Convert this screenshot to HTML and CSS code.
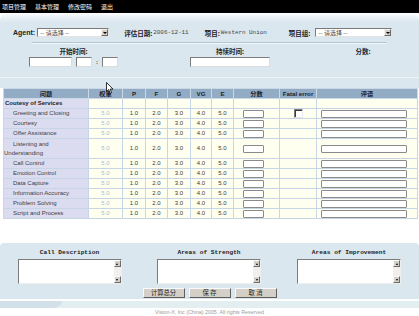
FILE: index.html
```html
<!DOCTYPE html>
<html>
<head>
<meta charset="utf-8">
<title>评估</title>
<link rel="stylesheet" href="styles.css">
</head>
<body>
<div class="nav"><span>项目管理</span><span>基本管理</span><span>修改密码</span><span>退出</span></div>

<div class="top">
  <div class="row1">
    <b class="agent">Agent:</b>
    <div class="sel s1"><span>-- 请选择 --</span><i></i></div>
    <b class="lbl date">评估日期:</b><span class="mono">2006-12-11</span>
    <b class="lbl proj">项目:</b><span class="mono">Western Union</span>
    <b class="lbl grp">项目组:</b>
    <div class="sel s2"><span>-- 请选择 --</span><i></i></div>
  </div>
  <div class="sep"></div>
  <div class="row2">
    <div class="g">
      <b class="lbl">开始时间:</b>
      <div class="inrow"><span class="in w43"></span><span class="in w16"></span><b class="colon">:</b><span class="in w16"></span></div>
    </div>
    <div class="g">
      <b class="lbl">持续时间:</b>
      <div class="inrow"><span class="in w80"></span></div>
    </div>
    <div class="g"><b class="lbl">分数:</b></div>
  </div>
  <div class="sep2"></div>
</div>

<table class="grid">
  <colgroup>
    <col style="width:85px"><col style="width:34px"><col style="width:23px"><col style="width:22px"><col style="width:23px"><col style="width:21px"><col style="width:22px"><col style="width:46px"><col style="width:37px"><col style="width:101px">
  </colgroup>
  <tr><th>问题</th><th>权重</th><th>P</th><th>F</th><th>G</th><th>VG</th><th>E</th><th>分数</th><th>Fatal error</th><th>评语</th></tr>
  <tr><td class="q sec">Coutesy of Services</td><td></td><td></td><td></td><td></td><td></td><td></td><td></td><td></td><td></td></tr>
  <tr><td class="q">Greeting and Closing</td><td class="w">5.0</td><td>1.0</td><td>2.0</td><td>3.0</td><td>4.0</td><td>5.0</td><td class="sc"><span class="ti"></span></td><td><span class="cb"></span></td><td class="cm"><span class="ti wide"></span></td></tr>
  <tr><td class="q">Courtesy</td><td class="w">5.0</td><td>1.0</td><td>2.0</td><td>3.0</td><td>4.0</td><td>5.0</td><td class="sc"><span class="ti"></span></td><td></td><td class="cm"><span class="ti wide"></span></td></tr>
  <tr><td class="q">Offer Assistance</td><td class="w">5.0</td><td>1.0</td><td>2.0</td><td>3.0</td><td>4.0</td><td>5.0</td><td class="sc"><span class="ti"></span></td><td></td><td class="cm"><span class="ti wide"></span></td></tr>
  <tr class="dbl"><td class="q">Listening and<br>Understanding</td><td class="w">5.0</td><td>1.0</td><td>2.0</td><td>3.0</td><td>4.0</td><td>5.0</td><td class="sc"><span class="ti"></span></td><td></td><td class="cm"><span class="ti wide"></span></td></tr>
  <tr><td class="q">Call Control</td><td class="w">5.0</td><td>1.0</td><td>2.0</td><td>3.0</td><td>4.0</td><td>5.0</td><td class="sc"><span class="ti"></span></td><td></td><td class="cm"><span class="ti wide"></span></td></tr>
  <tr><td class="q">Emotion Control</td><td class="w">5.0</td><td>1.0</td><td>2.0</td><td>3.0</td><td>4.0</td><td>5.0</td><td class="sc"><span class="ti"></span></td><td></td><td class="cm"><span class="ti wide"></span></td></tr>
  <tr><td class="q">Data Capture</td><td class="w">5.0</td><td>1.0</td><td>2.0</td><td>3.0</td><td>4.0</td><td>5.0</td><td class="sc"><span class="ti"></span></td><td></td><td class="cm"><span class="ti wide"></span></td></tr>
  <tr><td class="q">Information Accuracy</td><td class="w">5.0</td><td>1.0</td><td>2.0</td><td>3.0</td><td>4.0</td><td>5.0</td><td class="sc"><span class="ti"></span></td><td></td><td class="cm"><span class="ti wide"></span></td></tr>
  <tr><td class="q">Problem Solving</td><td class="w">5.0</td><td>1.0</td><td>2.0</td><td>3.0</td><td>4.0</td><td>5.0</td><td class="sc"><span class="ti"></span></td><td></td><td class="cm"><span class="ti wide"></span></td></tr>
  <tr><td class="q">Script and Process</td><td class="w">5.0</td><td>1.0</td><td>2.0</td><td>3.0</td><td>4.0</td><td>5.0</td><td class="sc"><span class="ti"></span></td><td></td><td class="cm"><span class="ti wide"></span></td></tr>
</table>

<div class="bottom">
  <div class="cols">
    <div class="col"><b>Call Description</b><div class="ta"><div class="sb"><i class="up"></i><i class="dn"></i></div></div></div>
    <div class="col"><b>Areas of Strength</b><div class="ta"><div class="sb"><i class="up"></i><i class="dn"></i></div></div></div>
    <div class="col"><b>Areas of Improvement</b><div class="ta"><div class="sb"><i class="up"></i><i class="dn"></i></div></div></div>
  </div>
  <div class="btns"><span class="btn">计算总分</span><span class="btn">保 存</span><span class="btn">取 消</span></div>
</div>

<div class="band"><span class="tab"></span></div>
<div class="copy">Vision-X, Inc (China) 2005. All rights Reserved</div>

<svg class="cursor" width="8" height="12" viewBox="0 0 8 12"><path d="M0.5 0.5 L0.5 9.5 L2.6 7.6 L4.2 11.2 L5.6 10.6 L4.1 7.1 L7 7.1 Z" fill="#fff" stroke="#000" stroke-width="0.8" stroke-linejoin="round"/></svg>
</body>
</html>
```
FILE: styles.css
```css
* { box-sizing: border-box; }
html, body { margin: 0; padding: 0; background: #fff; }
body {
  width: 419px;
  height: 316px;
  overflow: hidden;
  position: relative;
  font-family: "Liberation Sans", "Noto Sans CJK SC", sans-serif;
  color: #333;
}

.nav {
  height: 13px;
  background: #000;
  color: #fff;
  font: 6px/13px "Noto Sans CJK SC", sans-serif;
  padding-left: 2px;
  display: flex;
  gap: 9px;
}

.top {
  margin-top: 1px;
  height: 74px;
  border-radius: 6px 6px 0 0;
  background: linear-gradient(#f8fbfc 0, #e9f1f6 4px, #dbe7ef 8px, #dbe7ef 100%);
  padding-top: 14px;
}

.row1 {
  display: flex;
  align-items: center;
  height: 9px;
  white-space: nowrap;
}
.agent { margin-left: 13px; font: bold 7px/9px "Liberation Sans", sans-serif; color: #222; }
.lbl { font: bold 6.5px/8px "Noto Sans CJK SC", sans-serif; color: #222; }
.mono { font: 5.9px/9px "Liberation Mono", monospace; color: #444; margin-left: 1px; }
.date { margin-left: 15px; }
.proj { margin-left: 16px; }
.grp { margin-left: 22px; }

.sel {
  height: 9px;
  display: flex;
  align-items: center;
  background: #fff;
  border: 1px solid;
  border-color: #7a7a7a #e4e4e4 #e4e4e4 #7a7a7a;
  padding-left: 2px;
  font: 6px/7px "Noto Sans CJK SC", sans-serif;
  color: #444;
}
.sel span { flex: 1; }
.sel i {
  width: 7px;
  height: 7px;
  background: #d4d0c8;
  border: 1px solid;
  border-color: #f4f4f4 #6a6a6a #6a6a6a #f4f4f4;
  display: flex;
  align-items: center;
  justify-content: center;
}
.sel i::after {
  content: "";
  border-left: 2px solid transparent;
  border-right: 2px solid transparent;
  border-top: 2px solid #000;
}
.s1 { margin-left: 2px; width: 72px; }
.s2 { margin-left: 5px; width: 77px; }

.sep {
  margin: 5px 32px 0 32px;
  height: 2px;
  border-top: 1px solid #b5c5d2;
  border-bottom: 1px solid #f2f7fa;
}

.row2 {
  margin-top: 3px;
  display: grid;
  grid-template-columns: 147px 166px 100px;
}
.g { display: flex; flex-direction: column; align-items: center; }
.inrow { margin-top: 2px; display: flex; align-items: center; gap: 4px; }
.in {
  display: block;
  height: 10px;
  background: #fff;
  border: 1px solid;
  border-color: #7c7c7c #dcdcdc #dcdcdc #7c7c7c;
}
.w43 { width: 43px; }
.w16 { width: 16px; }
.w80 { width: 80px; }
.colon { font: bold 6px/8px "Liberation Sans", sans-serif; color: #333; }

.sep2 {
  margin-top: 10px;
  height: 1px;
  background: #eef4f8;
}

table.grid {
  margin: 0 2px 0 3px;
  width: 414px;
  border-collapse: collapse;
  table-layout: fixed;
  font-size: 6px;
  color: #3a3a3a;
}
.grid tr { height: 10px; }
.grid tr.dbl { height: 20px; }
.grid th {
  background: #93acc6;
  border: 1px solid #cbd8e5;
  padding: 0;
  font: bold 6.2px/8px "Liberation Sans", "Noto Sans CJK SC", sans-serif;
  color: #18222e;
  text-align: center;
  white-space: nowrap;
}
.grid td {
  border: 1px solid #c6d6e6;
  background: #fffff0;
  padding: 0;
  line-height: 8.5px;
  text-align: center;
  white-space: nowrap;
}
.grid td.q {
  background: #dcdcf0;
  text-align: left;
  text-indent: 9px;
  color: #3c3c3c;
}
.grid td.sec { font-weight: bold; text-indent: 1px; color: #222; }
.grid td.w { color: #a8bbcd; }
.grid td.sc { text-align: left; padding-left: 9px; }
.grid td.cm { text-align: left; padding-left: 4px; }
.ti {
  display: inline-block;
  vertical-align: middle;
  width: 21px;
  height: 8px;
  background: #fff;
  border: 1px solid #8a8a8a;
  border-radius: 1px;
}
.ti.wide { width: 86px; }
.cb {
  display: inline-block;
  vertical-align: middle;
  width: 9px;
  height: 9px;
  background: #fff;
  border: 1px solid;
  border-color: #7c7c7c #e8e8e8 #e8e8e8 #7c7c7c;
  box-shadow: inset 1px 1px 0 #3a3a3a;
}

.bottom {
  margin-top: 24px;
  height: 56px;
  background: #dbe7ef;
  border-radius: 4px 4px 0 0;
  padding-top: 6px;
}
.cols {
  display: grid;
  grid-template-columns: 139px 140px 140px;
}
.col { display: flex; flex-direction: column; align-items: center; }
.col b { font: bold 6.2px/8px "Liberation Mono", monospace; color: #222; white-space: nowrap; }
.ta {
  margin-top: 2px;
  width: 104px;
  height: 25px;
  background: #fff;
  border: 1px solid;
  border-color: #7c7c7c #eeeeee #eeeeee #7c7c7c;
  display: flex;
  justify-content: flex-end;
}
.sb {
  width: 7px;
  height: 100%;
  background: #f1f0ec;
  display: flex;
  flex-direction: column;
  justify-content: space-between;
}
.sb i {
  display: flex;
  align-items: center;
  justify-content: center;
  height: 7px;
  background: #d4d0c8;
  border: 1px solid;
  border-color: #fafafa #6c6c6c #6c6c6c #fafafa;
}
.sb i::after {
  content: "";
  border-left: 1.5px solid transparent;
  border-right: 1.5px solid transparent;
}
.sb i.up::after { border-bottom: 2px solid #000; }
.sb i.dn::after { border-top: 2px solid #000; }

.btns {
  margin-top: 4px;
  display: flex;
  justify-content: center;
  gap: 4px;
}
.btn {
  width: 42px;
  height: 10px;
  background: #d4d0c8;
  border: 1px solid;
  border-color: #fafafa #5e5e5e #5e5e5e #fafafa;
  font: 6.3px/8px "Noto Sans CJK SC", sans-serif;
  color: #222;
  text-align: center;
}

.band {
  margin-top: 2px;
  height: 7px;
  background: #e2eef0;
  display: flex;
}
.tab {
  display: block;
  width: 62px;
  height: 7px;
  background: #d2e0e9;
  border-bottom-right-radius: 10px 7px;
}
.copy {
  text-align: center;
  font: 5.3px/8px "Liberation Sans", sans-serif;
  color: #9c9c9c;
}

.cursor {
  position: absolute;
  left: 106px;
  top: 82px;
}
```
